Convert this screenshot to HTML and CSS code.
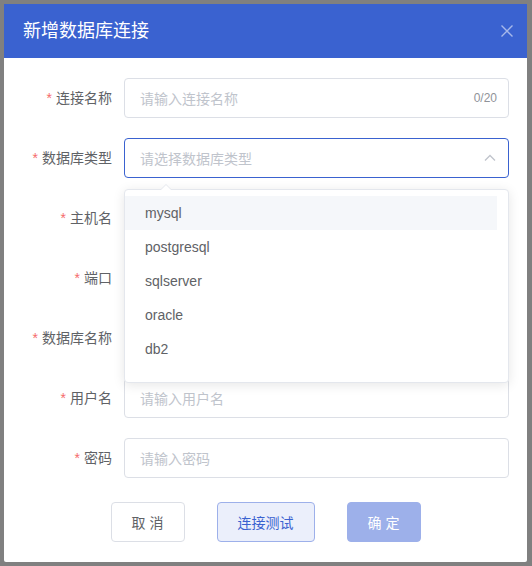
FILE: index.html
```html
<!DOCTYPE html>
<html lang="zh-CN">
<head>
<meta charset="utf-8">
<title>新增数据库连接</title>
<link rel="stylesheet" href="styles.css">
</head>
<body>
<div class="dialog">
  <div class="dialog-header">
    <span class="dialog-title">新增数据库连接</span>
    <button class="dialog-close" aria-label="关闭">
      <svg width="14" height="14" viewBox="0 0 14 14"><path d="M1.5 1.5 L12.5 12.5 M12.5 1.5 L1.5 12.5" stroke="currentColor" stroke-width="1.4" fill="none"/></svg>
    </button>
  </div>
  <div class="dialog-body">
    <div class="form-item">
      <label class="form-label"><span class="req">*</span>连接名称</label>
      <div class="input">
        <span class="placeholder">请输入连接名称</span>
        <span class="count">0/20</span>
      </div>
    </div>
    <div class="form-item select-item">
      <label class="form-label"><span class="req">*</span>数据库类型</label>
      <div class="input focused">
        <span class="placeholder">请选择数据库类型</span>
        <svg class="chev" width="14" height="14" viewBox="0 0 14 14"><path d="M2 9.5 L7 4.5 L12 9.5" stroke="currentColor" stroke-width="1.3" fill="none"/></svg>
      </div>
      <div class="dropdown">
        <span class="dropdown-arrow"></span>
        <ul class="options">
          <li class="option hover">mysql</li>
          <li class="option">postgresql</li>
          <li class="option">sqlserver</li>
          <li class="option">oracle</li>
          <li class="option">db2</li>
        </ul>
      </div>
    </div>
    <div class="form-item">
      <label class="form-label"><span class="req">*</span>主机名</label>
      <div class="input"></div>
    </div>
    <div class="form-item">
      <label class="form-label"><span class="req">*</span>端口</label>
      <div class="input"></div>
    </div>
    <div class="form-item">
      <label class="form-label"><span class="req">*</span>数据库名称</label>
      <div class="input"></div>
    </div>
    <div class="form-item">
      <label class="form-label"><span class="req">*</span>用户名</label>
      <div class="input"><span class="placeholder">请输入用户名</span></div>
    </div>
    <div class="form-item">
      <label class="form-label"><span class="req">*</span>密码</label>
      <div class="input"><span class="placeholder">请输入密码</span></div>
    </div>
    <div class="footer">
      <button class="btn btn-default">取 消</button>
      <button class="btn btn-plain">连接测试</button>
      <button class="btn btn-primary">确 定</button>
    </div>
  </div>
</div>
</body>
</html>
```

FILE: styles.css
```css
* { box-sizing: border-box; }
html, body { margin: 0; }
body {
  background: #808080;
  padding: 4px;
  font-family: "Liberation Sans", "Noto Sans CJK SC", sans-serif;
  font-size: 14px;
  color: #606266;
}
.dialog {
  width: 523px;
  height: 558px;
  background: #fff;
  border-radius: 2px;
  overflow: visible;
  position: relative;
}
.dialog-header {
  height: 54px;
  background: #3a62d0;
  display: flex;
  align-items: center;
  justify-content: space-between;
  padding: 0 13px 0 19px;
}
.dialog-title {
  color: #fff;
  font-size: 18px;
  line-height: 24px;
}
.dialog-close {
  background: none;
  border: 0;
  padding: 0;
  color: #a7b8ea;
  display: flex;
}
.dialog-body {
  padding: 20px 18px 20px 20px;
}
.form-item {
  display: flex;
  align-items: center;
  margin-bottom: 20px;
  position: relative;
}
.form-label {
  width: 100px;
  padding-right: 12px;
  text-align: right;
  line-height: 40px;
  color: #606266;
  font-size: 14px;
}
.req {
  color: #f56c6c;
  margin-right: 4px;
}
.input {
  flex: 1;
  height: 40px;
  border: 1px solid #dcdfe6;
  border-radius: 4px;
  display: flex;
  align-items: center;
  justify-content: space-between;
  padding: 0 11px 0 15px;
}
.input.focused { border-color: #3a62d0; }
.placeholder { color: #c0c4cc; }
.count { color: #909399; font-size: 12px; }
.chev { color: #c0c4cc; }
.dropdown {
  position: absolute;
  left: 100px;
  right: 0;
  top: 51px;
  height: 194px;
  background: #fff;
  border: 1px solid #e4e7ed;
  border-radius: 4px;
  box-shadow: 0 2px 12px 0 rgba(0,0,0,0.1);
  padding: 6px 0;
  z-index: 10;
}
.dropdown-arrow {
  position: absolute;
  top: -6px;
  left: 35px;
  width: 0;
  height: 0;
  border-left: 6px solid transparent;
  border-right: 6px solid transparent;
  border-bottom: 6px solid #e4e7ed;
}
.dropdown-arrow::after {
  content: "";
  position: absolute;
  left: -5px;
  top: 1px;
  border-left: 5px solid transparent;
  border-right: 5px solid transparent;
  border-bottom: 5px solid #fff;
}
.options {
  list-style: none;
  margin: 0 11px 0 0;
  padding: 0;
}
.option {
  height: 34px;
  line-height: 34px;
  padding: 0 20px;
  color: #606266;
  font-size: 14px;
}
.option.hover { background: #f5f7fa; }
.footer {
  display: flex;
  justify-content: center;
  gap: 32px;
  margin: 24px 0 0 -2px;
}
.btn {
  height: 40px;
  border-radius: 4px;
  font-family: inherit;
  font-size: 14px;
  padding: 0 20px;
  border: 1px solid #dcdfe6;
  background: #fff;
  color: #606266;
}
.btn-default { width: 74px; }
.btn-plain {
  width: 98px;
  background: #ebeffb;
  border-color: #9db0ea;
  color: #3a62d0;
}
.btn-primary {
  width: 74px;
  background: #9db0ea;
  border-color: #9db0ea;
  color: #fff;
}
```
